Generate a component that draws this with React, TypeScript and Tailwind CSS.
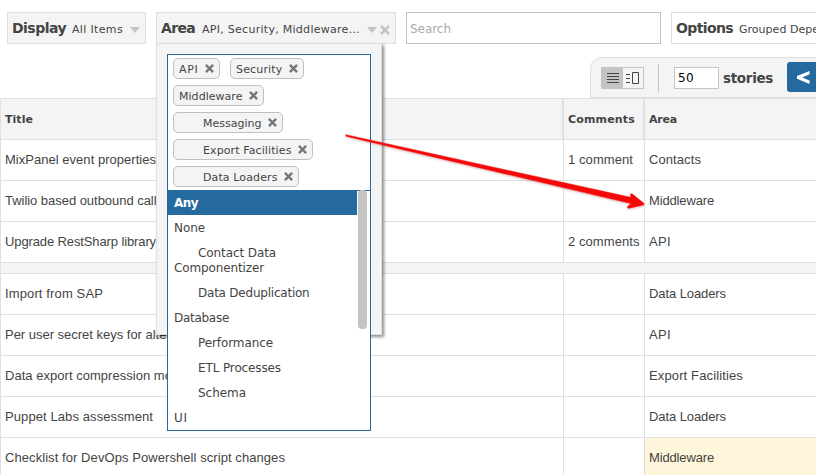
import React from "react";

const verdana = "font-['DejaVu_Sans',Verdana,sans-serif]";

type TProps = { w: number; size: number; bold?: boolean; className?: string; children: string };

/** Text run stretched or squeezed to a given advance width through letter spacing. */
function T({ w, size, bold, className = "", children }: TProps) {
  const ref = React.useRef<HTMLSpanElement>(null);
  React.useLayoutEffect(() => {
    const el = ref.current;
    if (!el) return;
    el.style.letterSpacing = "0px";
    const natural = el.getBoundingClientRect().width;
    el.style.letterSpacing = `${(w - natural) / children.length}px`;
  }, [w, size, children]);
  return (
    <span
      ref={ref}
      className={`inline-block shrink-0 whitespace-pre ${bold ? "font-bold" : ""} ${className}`}
      style={{ fontSize: size }}
    >
      {children}
    </span>
  );
}

function Cross({ size, className }: { size: number; className: string }) {
  return (
    <svg width={size} height={size} viewBox="0 0 9 9" className={`shrink-0 ${className}`}>
      <path d="M.9 .9 8.1 8.1M8.1 .9 .9 8.1" stroke="currentColor" strokeWidth="2.3" fill="none" />
    </svg>
  );
}

function Caret() {
  return (
    <svg width="10" height="6" viewBox="0 0 10 6" className="shrink-0 text-[#c4c4c4]">
      <path d="M0 0H10L5 6Z" fill="currentColor" />
    </svg>
  );
}

function Chip({ label, w, tw, indent }: { label: string; w: number; tw: number; indent?: boolean }) {
  return (
    <div
      className={`flex h-[21px] shrink-0 items-center rounded-[5px] border border-[#bfbfbf] bg-[#f4f4f4] ${indent ? "pl-[29px]" : "pl-[5px]"}`}
      style={{ width: w }}
    >
      <T w={tw} size={11} className="pt-[2px] leading-[19px]">{label}</T>
      <Cross size={9} className="ml-[6.5px] text-[#757575]" />
    </div>
  );
}

type Row = { title: string; tw: number; comments?: string; cw?: number; area: string; aw: number; hot?: boolean };

const top: Row[] = [
  { title: "MixPanel event properties", tw: 151, comments: "1 comment", cw: 65, area: "Contacts", aw: 52 },
  { title: "Twilio based outbound calls", tw: 158, area: "Middleware", aw: 65 },
  { title: "Upgrade RestSharp library", tw: 151, comments: "2 comments", cw: 71.5, area: "API", aw: 22 },
];
const bottom: Row[] = [
  { title: "Import from SAP", tw: 98, area: "Data Loaders", aw: 77 },
  { title: "Per user secret keys for alternate", tw: 191, area: "API", aw: 22 },
  { title: "Data export compression modes", tw: 188, area: "Export Facilities", aw: 94 },
  { title: "Puppet Labs assessment", tw: 148, area: "Data Loaders", aw: 77 },
  { title: "Checklist for DevOps Powershell script changes", tw: 280, area: "Middleware", aw: 65, hot: true },
];

function TableRow({ r }: { r: Row }) {
  return (
    <div className="grid h-[41px] grid-cols-[563px_81px_172px] border-t border-[#e0e0e0] font-['Liberation_Sans',Arial,sans-serif] leading-[38px]">
      <div className="overflow-hidden border-l border-[#e0e0e0] pl-1">
        <T w={r.tw} size={13}>{r.title}</T>
      </div>
      <div className="border-l border-[#e0e0e0] pl-1">
        {r.comments && <T w={r.cw ?? 0} size={13}>{r.comments}</T>}
      </div>
      <div className={`border-l border-[#e0e0e0] pl-1 ${r.hot ? "bg-[#fef6da]" : ""}`}>
        <T w={r.aw} size={13}>{r.area}</T>
      </div>
    </div>
  );
}

const options: { label: string; w: number; child?: boolean }[] = [
  { label: "None", w: 31 },
  { label: "Contact Data", w: 78, child: true },
  { label: "Data Deduplication", w: 111.5, child: true },
  { label: "Database", w: 55 },
  { label: "Performance", w: 75, child: true },
  { label: "ETL Processes", w: 83, child: true },
  { label: "Schema", w: 48, child: true },
  { label: "UI", w: 14 },
];

function AreaMenu() {
  return (
    <div className="absolute -left-px top-[30px] z-10 h-[292px] w-[226px] border border-[#e0e0e0] bg-[#f4f4f4] px-[10px] pt-[10px] shadow-[2px_2px_3px_rgba(0,0,0,0.45)]">
      <div className="h-[377px] w-[204px] border border-[#2569a0] bg-white">
        <div className="flex h-[135px] flex-col gap-[6px] pl-[5px] pt-[3px]">
          <div className="flex gap-[10px]">
            <Chip label="API" w={47} tw={19.5} />
            <Chip label="Security" w={74} tw={46.5} />
          </div>
          <Chip label="Middleware" w={91} tw={63.5} />
          <Chip label="Messaging" w={110} tw={58.5} indent />
          <Chip label="Export Facilities" w={140} tw={88.5} indent />
          <Chip label="Data Loaders" w={126} tw={74.5} indent />
        </div>
        <div className="flex h-[240px] border-t border-[#2569a0]">
          <div className="-mt-px w-[189px] text-[#444]">
            <div className="h-[25px] bg-[#256a9f] pl-[6px] leading-[24px] text-white">
              <T w={24} size={12} bold>Any</T>
            </div>
            {options.map((o) => (
              <div key={o.label} className={`pl-[6px] pt-[6px] leading-[15px] ${o.label === "Contact Data" ? "h-10" : "h-[25px]"}`}>
                <div className={`flex h-[15px] ${o.child ? "pl-6" : ""}`}>
                  <T w={o.w} size={12}>{o.label}</T>
                </div>
                {o.label === "Contact Data" && (
                  <div className="flex h-[15px]">
                    <T w={90} size={12}>Componentizer</T>
                  </div>
                )}
              </div>
            ))}
          </div>
          <div className="-mt-px ml-px h-[139px] w-[9px] rounded-[4px] bg-[#c4c4c4]" />
        </div>
      </div>
    </div>
  );
}

function Toolbar() {
  return (
    <div className="ml-[590px] mt-[13px] flex h-[41px] items-start rounded-tl-[12px] border-b border-l border-t border-[#e0e0e0] bg-[#f4f4f4] pl-[10px]">
      <div className="mt-[9px] flex h-[22px] w-[43px] shrink-0 border border-[#c4c4c4]">
        <div className="flex w-[21px] items-center justify-center bg-[#c4c4c4]">
          <svg width="12" height="10" viewBox="0 0 12 10">
            <path d="M0 .5H12M0 3.5H12M0 6.5H12M0 9.5H12" stroke="#444" />
          </svg>
        </div>
        <div className="flex w-5 items-center justify-center">
          <svg width="14" height="12" viewBox="0 0 14 12">
            <path d="M0 2.5H4M0 6.5H4M0 10.5H4M6.5 .5H12.5V11.5H6.5Z" stroke="#444" fill="none" />
          </svg>
        </div>
      </div>
      <div className="ml-[14px] mt-[6px] h-7 w-px shrink-0 bg-[#c4c4c4]" />
      <div className="ml-[15px] mt-[9px] h-[22px] w-[45px] shrink-0 border border-[#c4c4c4] bg-white pl-[3px] leading-[21px] text-black">
        <T w={16} size={12} className="align-top">50</T>
      </div>
      <T w={50} size={13.5} bold className="ml-1 mt-[9px] leading-[22px]">stories</T>
      <div className="ml-[14px] mt-[4px] flex h-[30px] flex-1 items-center rounded-l-[3px] bg-[#256a9f] pl-[10px]">
        <svg width="13" height="13" viewBox="0 0 13 13">
          <path d="M12.5 0V3.3L5.3 6.4 12.5 9.6V13L0 7.8V5Z" fill="#fff" />
        </svg>
      </div>
    </div>
  );
}

export default function App() {
  return (
    <div className={`relative h-[475px] w-[816px] overflow-hidden bg-white text-[#444] ${verdana}`}>
      <div className="flex pl-[7px] pt-3">
        <div className="flex h-8 w-[139px] shrink-0 items-center border border-[#e0e0e0] bg-[#f4f4f4] pl-1">
          <T w={54} size={14} bold className="leading-[30px]">Display</T>
          <T w={51} size={11} className="ml-[6px] pt-[4px]">All Items</T>
          <div className="ml-[7px] pt-[3px]"><Caret /></div>
        </div>
        <div className="relative ml-[10px] flex h-8 w-[240px] shrink-0 items-center border border-[#e0e0e0] bg-[#f4f4f4] pl-1">
          <T w={34} size={14} bold className="leading-[30px]">Area</T>
          <T w={158} size={11} className="ml-[7px] pt-[4px]">API, Security, Middleware...</T>
          <div className="ml-[7px] pt-[3px]"><Caret /></div>
          <Cross size={10} className="ml-[3px] mt-[4px] text-[#c4c4c4]" />
          <AreaMenu />
        </div>
        <div className="ml-[10px] h-8 w-[255px] shrink-0 border border-[#c4c4c4] bg-white pl-[3px] leading-[32px] text-[#aaa]">
          <T w={41} size={12} className="align-top">Search</T>
        </div>
        <div className="ml-[10px] flex h-8 w-[180px] shrink-0 items-center border border-[#e0e0e0] pl-1">
          <T w={57} size={14} bold className="leading-[30px]">Options</T>
          <T w={80} size={11} className="ml-[6px] pt-[4px]">Grouped Depe</T>
        </div>
      </div>
      <Toolbar />
      <div className="grid h-[41px] grid-cols-[562px_81px_173px] border-t border-[#e0e0e0] bg-[#f4f4f4] leading-[41px]">
        <div className="border-l border-[#e0e0e0] pl-1"><T w={28} size={11} bold className="align-top">Title</T></div>
        <div className="border-l-2 border-[#e0e0e0] pl-1"><T w={67} size={11} bold className="align-top">Comments</T></div>
        <div className="border-l-2 border-[#e0e0e0] pl-1"><T w={28} size={11} bold className="align-top">Area</T></div>
      </div>
      {top.map((r) => <TableRow key={r.title} r={r} />)}
      <div className="h-[11px] border-l border-t border-[#e0e0e0] bg-[#f4f4f4]" />
      {bottom.map((r) => <TableRow key={r.title} r={r} />)}
      <svg width="816" height="475" viewBox="0 0 816 475" className="pointer-events-none absolute left-0 top-0 z-20 drop-shadow-[0_1px_1px_rgba(120,0,0,0.3)]">
        <g fill="#f60808" stroke="#f60808" strokeLinejoin="round" strokeLinecap="round">
          <path d="M346 134.7 634 198 636 204.5 632 203.8 346 136.3Z" strokeWidth=".4" />
          <path d="M631.5 194.7 643 203.9 628.5 207.2 634 202.5Z" strokeWidth="2.6" />
        </g>
      </svg>
    </div>
  );
}
